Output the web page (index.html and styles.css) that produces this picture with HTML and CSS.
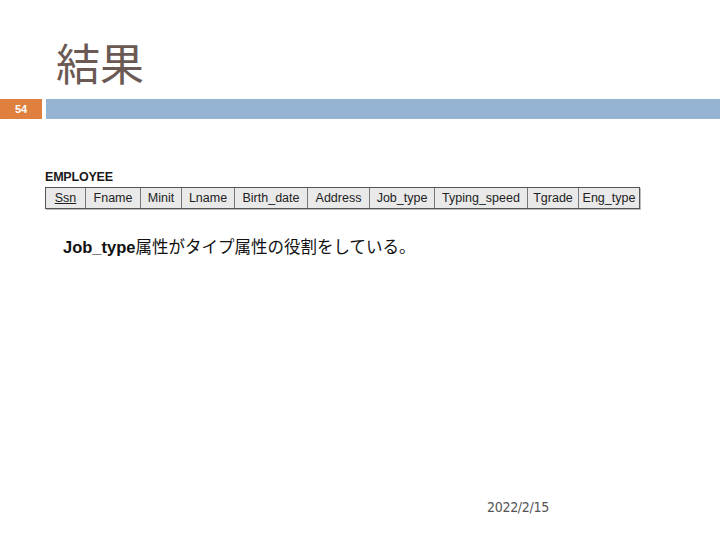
FILE: index.html
```html
<!DOCTYPE html>
<html>
<head>
<meta charset="utf-8">
<link rel="stylesheet" href="styles.css">
</head>
<body>
<div class="slide">
  <h1 class="title">結果</h1>
  <div class="bar">
    <div class="num">54</div>
    <div class="line"></div>
  </div>
  <div class="content">
    <div class="ent">EMPLOYEE</div>
    <div class="table">
      <div class="cell w1"><span class="u">Ssn</span></div>
      <div class="cell w2">Fname</div>
      <div class="cell w3">Minit</div>
      <div class="cell w4">Lname</div>
      <div class="cell w5">Birth_date</div>
      <div class="cell w6">Address</div>
      <div class="cell w7">Job_type</div>
      <div class="cell w8">Typing_speed</div>
      <div class="cell w9">Tgrade</div>
      <div class="cell w10">Eng_type</div>
    </div>
    <p class="note"><b>Job_type</b>属性がタイプ属性の役割をしている。</p>
  </div>
  <div class="date">2022/2/15</div>
</div>
</body>
</html>
```
FILE: styles.css
```css
html, body { margin: 0; padding: 0; background: #fff; }
.slide { width: 720px; height: 540px; position: relative; overflow: hidden; }
.title {
  margin: 0; padding: 32px 0 0 56px; box-sizing: border-box;
  font-family: "Noto Sans CJK JP", sans-serif; font-weight: 400;
  font-size: 44px; line-height: 60px; color: #6b5953;
  height: 99px;
}
.bar { display: flex; height: 20px; gap: 4px; }
.num {
  width: 42px; background: #e0803f; color: #fff;
  font-family: "Liberation Sans", sans-serif; font-weight: bold; font-size: 11px;
  line-height: 20px; text-align: center;
}
.line { flex: 1; background: #94b4d1; }
.content { padding: 50px 0 0 45px; }
.ent {
  font-family: "Liberation Sans", sans-serif; font-weight: bold; font-size: 12.5px;
  color: #1a1a1a; line-height: 16px; height: 18px; letter-spacing: -0.2px;
}
.table {
  display: flex; width: 595px; height: 22px; box-sizing: border-box;
  border: 1px solid #555; background: #e9e9e9;
  box-shadow: 1px 1px 0 #bbb;
}
.cell {
  box-sizing: border-box; border-right: 1px solid #777;
  font-family: "Liberation Sans", sans-serif; font-size: 12.5px; color: #222;
  line-height: 21px; text-align: center;
}
.cell:last-child { border-right: none; }
.u { text-decoration: underline; }
.w1 { width: 40px; } .w2 { width: 55px; } .w3 { width: 41px; } .w4 { width: 53px; }
.w5 { width: 73px; } .w6 { width: 62px; } .w7 { width: 65px; } .w8 { width: 93px; }
.w9 { width: 51px; } .w10 { flex: 1; }
.note {
  margin: 28px 0 0 18px;
  font-family: "Liberation Sans", "Noto Sans CJK JP", sans-serif; font-size: 16.5px;
  line-height: 20px; color: #111;
}
.date {
  position: absolute; left: 487px; top: 499px;
  font-family: "DejaVu Sans Condensed", "DejaVu Sans", sans-serif; font-size: 14px;
  letter-spacing: -0.3px; color: #555;
}
```
